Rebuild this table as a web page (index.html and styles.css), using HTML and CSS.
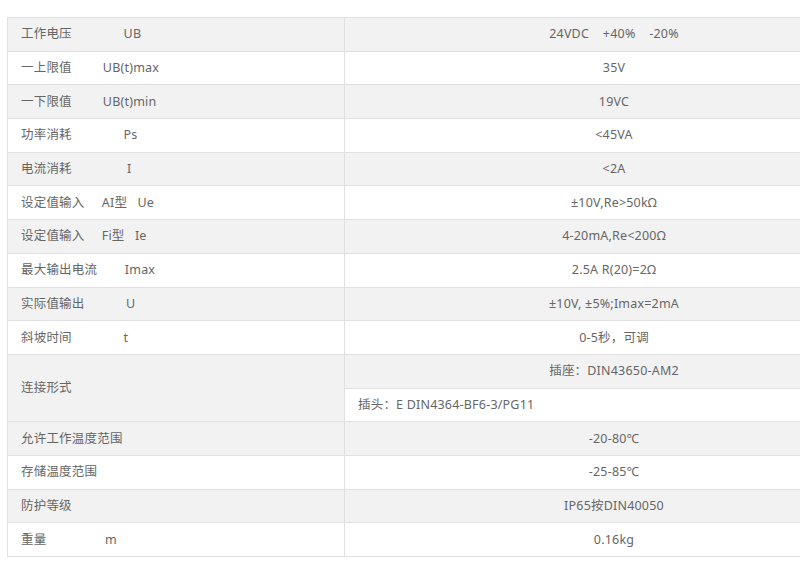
FILE: index.html
```html
<!DOCTYPE html>
<html lang="zh">
<head>
<meta charset="utf-8">
<title>参数</title>
<link rel="stylesheet" href="styles.css">
</head>
<body>
<div class="page">
<table class="spec">
<colgroup><col class="c1"><col class="c2"></colgroup>
<tbody>
<tr><td class="k">工作电压&nbsp;&nbsp;&nbsp;&nbsp;&nbsp;&nbsp;&nbsp;&nbsp;&nbsp;&nbsp;&nbsp;&nbsp;&nbsp;&nbsp;&nbsp;UB</td><td class="v">24VDC&nbsp;&nbsp;&nbsp;&nbsp;+40%&nbsp;&nbsp;&nbsp;&nbsp;-20%</td></tr>
<tr><td class="k">一上限值&nbsp;&nbsp;&nbsp;&nbsp;&nbsp;&nbsp;&nbsp;&nbsp;&nbsp;UB(t)max</td><td class="v">35V</td></tr>
<tr><td class="k">一下限值&nbsp;&nbsp;&nbsp;&nbsp;&nbsp;&nbsp;&nbsp;&nbsp;&nbsp;UB(t)min</td><td class="v">19VC</td></tr>
<tr><td class="k">功率消耗&nbsp;&nbsp;&nbsp;&nbsp;&nbsp;&nbsp;&nbsp;&nbsp;&nbsp;&nbsp;&nbsp;&nbsp;&nbsp;&nbsp;&nbsp;Ps</td><td class="v">&lt;45VA</td></tr>
<tr><td class="k">电流消耗&nbsp;&nbsp;&nbsp;&nbsp;&nbsp;&nbsp;&nbsp;&nbsp;&nbsp;&nbsp;&nbsp;&nbsp;&nbsp;&nbsp;&nbsp;&nbsp;I</td><td class="v">&lt;2A</td></tr>
<tr><td class="k">设定值输入&nbsp;&nbsp;&nbsp;&nbsp;&nbsp;AI型&nbsp;&nbsp;&nbsp;Ue</td><td class="v">±10V,Re&gt;50kΩ</td></tr>
<tr><td class="k">设定值输入&nbsp;&nbsp;&nbsp;&nbsp;&nbsp;Fi型&nbsp;&nbsp;&nbsp;Ie</td><td class="v">4-20mA,Re&lt;200Ω</td></tr>
<tr><td class="k">最大输出电流&nbsp;&nbsp;&nbsp;&nbsp;&nbsp;&nbsp;&nbsp;&nbsp;Imax</td><td class="v">2.5A R(20)=2Ω</td></tr>
<tr><td class="k">实际值输出&nbsp;&nbsp;&nbsp;&nbsp;&nbsp;&nbsp;&nbsp;&nbsp;&nbsp;&nbsp;&nbsp;&nbsp;U</td><td class="v">±10V, ±5%;Imax=2mA</td></tr>
<tr><td class="k">斜坡时间&nbsp;&nbsp;&nbsp;&nbsp;&nbsp;&nbsp;&nbsp;&nbsp;&nbsp;&nbsp;&nbsp;&nbsp;&nbsp;&nbsp;&nbsp;t</td><td class="v">0-5秒，可调</td></tr>
<tr><td class="k" rowspan="2">连接形式</td><td class="v">插座：DIN43650-AM2</td></tr>
<tr><td class="v left">插头：E DIN4364-BF6-3/PG11</td></tr>
<tr><td class="k">允许工作温度范围</td><td class="v">-20-80℃</td></tr>
<tr><td class="k">存储温度范围</td><td class="v">-25-85℃</td></tr>
<tr><td class="k">防护等级</td><td class="v">IP65按DIN40050</td></tr>
<tr><td class="k">重量&nbsp;&nbsp;&nbsp;&nbsp;&nbsp;&nbsp;&nbsp;&nbsp;&nbsp;&nbsp;&nbsp;&nbsp;&nbsp;&nbsp;&nbsp;&nbsp;&nbsp;m</td><td class="v">0.16kg</td></tr>
</tbody>
</table>
</div>
</body>
</html>
```

FILE: styles.css
```css
html, body {
  margin: 0;
  padding: 0;
  background: #fff;
  overflow: hidden;
}
.page {
  padding: 17px 0 0 7px;
}
.spec {
  border-collapse: collapse;
  table-layout: fixed;
  width: 876px;
  font-family: "Noto Sans", "Noto Sans CJK SC", sans-serif;
  font-size: 12.5px;
  letter-spacing: 0.2px;
  color: #666;
}
.c1 { width: 337px; }
.c2 { width: 539px; }
.spec tr { height: 33.7px; }
.spec tr:nth-child(odd) { background: #f2f2f2; }
.spec td {
  border: 1px solid #e0e0e0;
  padding: 0 13px;
  vertical-align: middle;
  white-space: nowrap;
  line-height: 16px;
}
.spec td.v { text-align: center; }
.spec td.v.left { text-align: left; }
```
